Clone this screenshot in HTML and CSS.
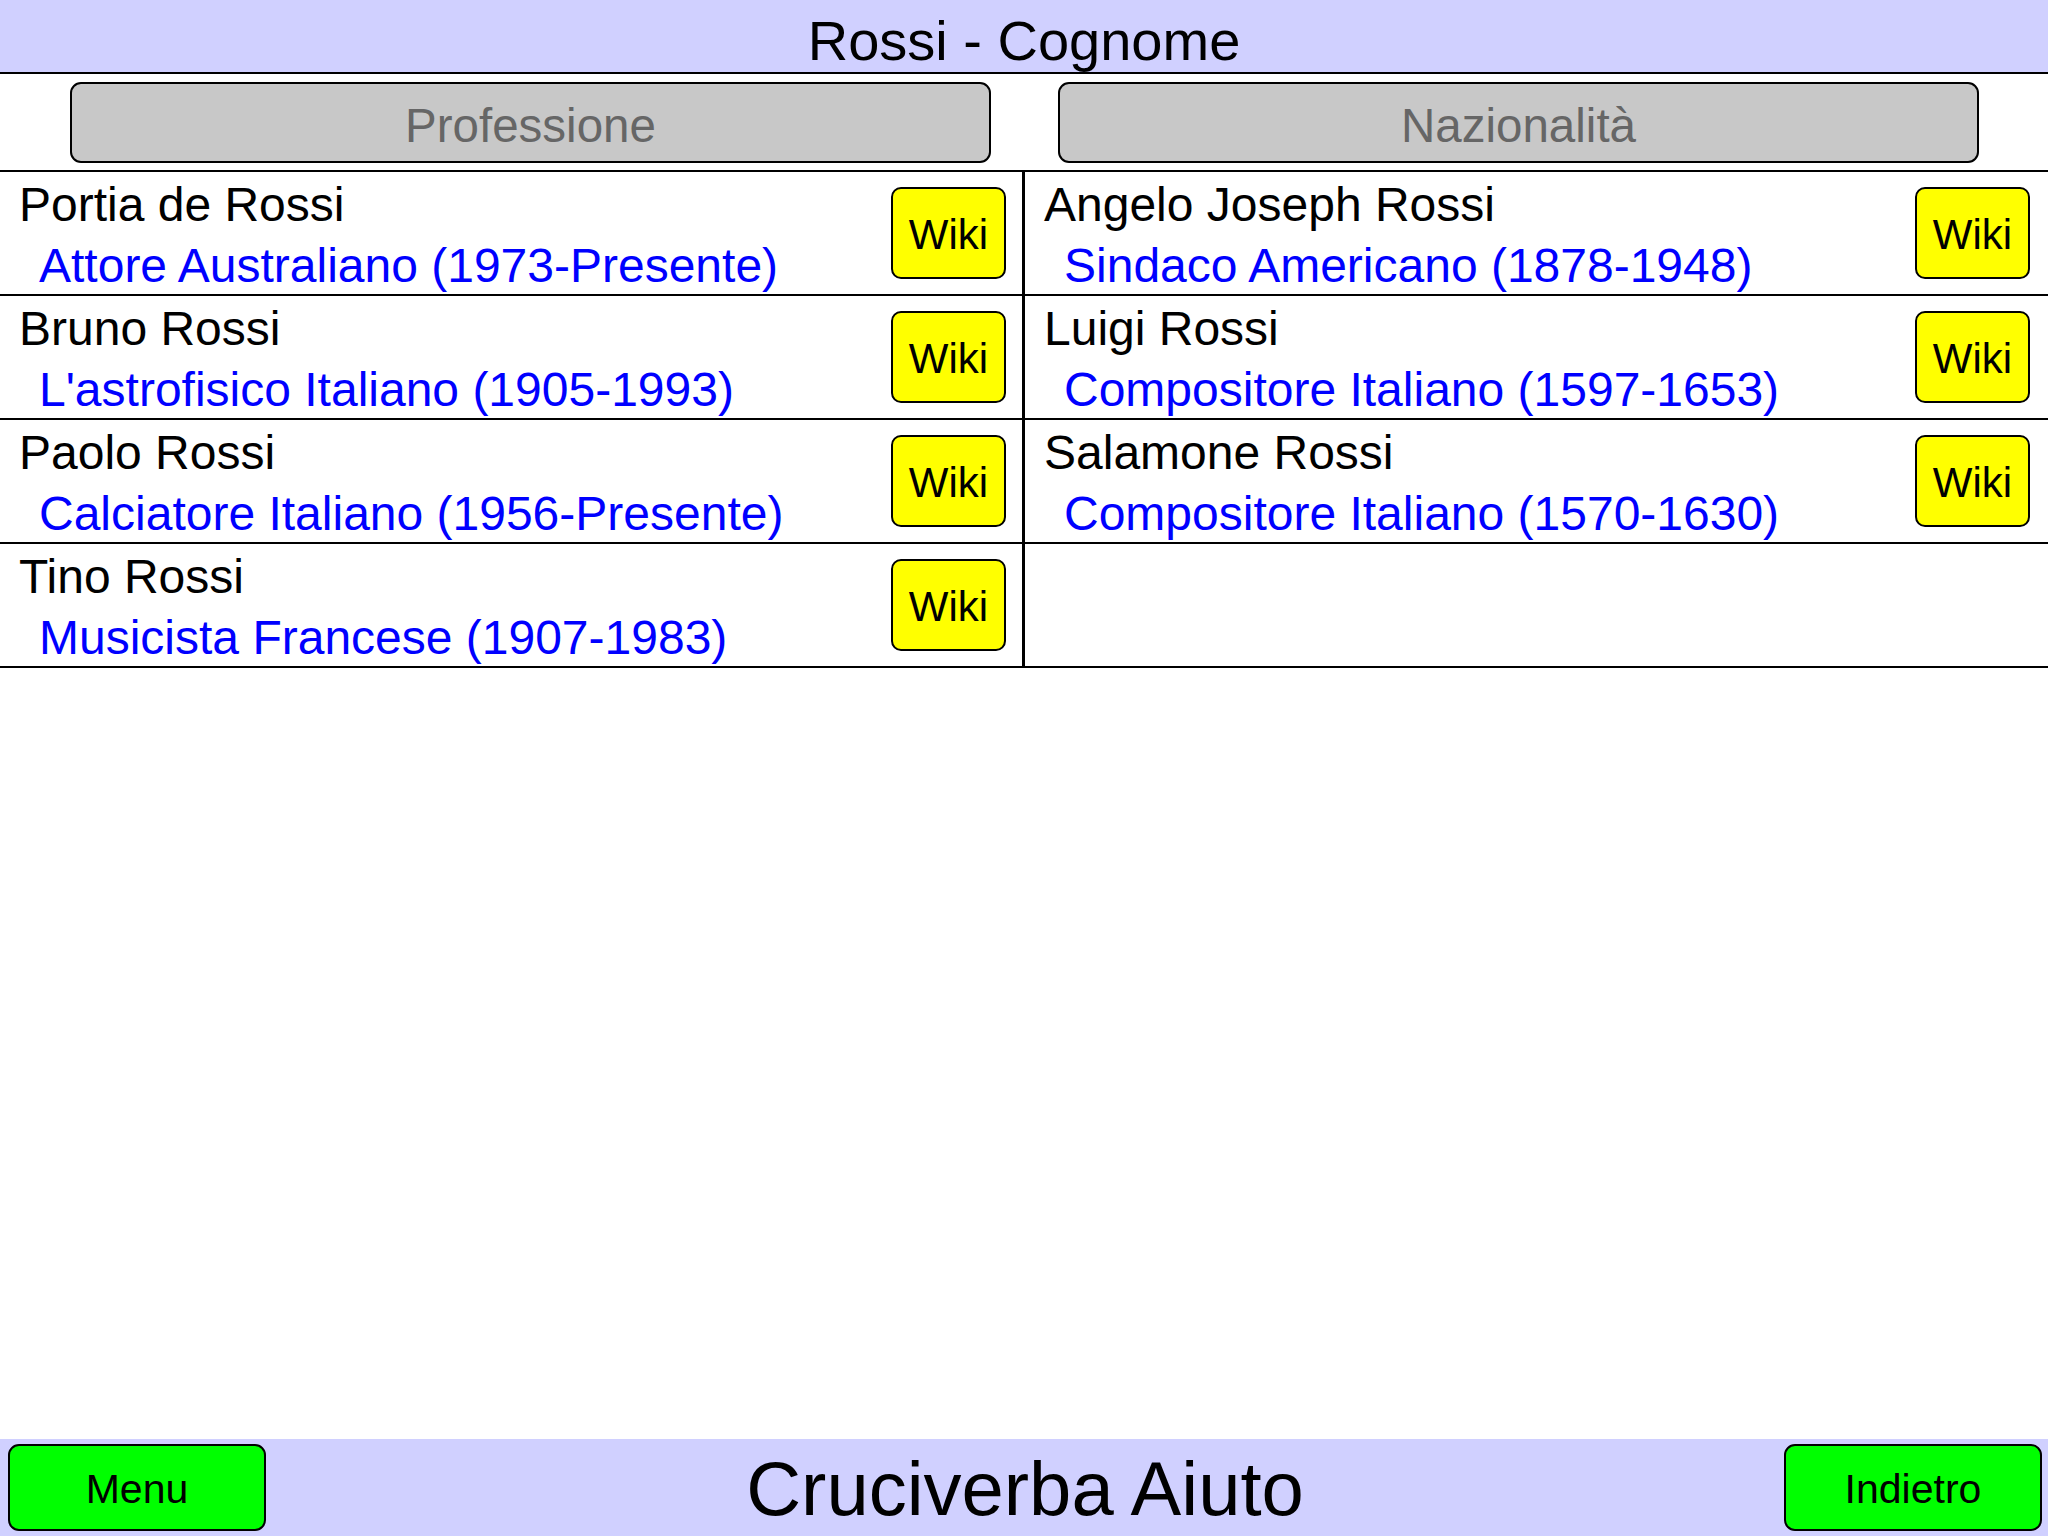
FILE: index.html
```html
<!DOCTYPE html>
<html lang="it">
<head>
<meta charset="utf-8">
<title>Rossi - Cognome</title>
<link rel="stylesheet" href="styles.css">
</head>
<body>
<div class="page">
  <header class="topbar">Rossi - Cognome</header>
  <nav class="tabs">
    <div class="tab">Professione</div>
    <div class="tab">Nazionalità</div>
  </nav>
  <main class="list">
    <div class="row">
      <div class="cell left">
        <div class="info"><div class="name">Portia de Rossi</div><div class="desc">Attore Australiano (1973-Presente)</div></div>
        <div class="wiki">Wiki</div>
      </div>
      <div class="cell right">
        <div class="info"><div class="name">Angelo Joseph Rossi</div><div class="desc">Sindaco Americano (1878-1948)</div></div>
        <div class="wiki">Wiki</div>
      </div>
    </div>
    <div class="row">
      <div class="cell left">
        <div class="info"><div class="name">Bruno Rossi</div><div class="desc">L'astrofisico Italiano (1905-1993)</div></div>
        <div class="wiki">Wiki</div>
      </div>
      <div class="cell right">
        <div class="info"><div class="name">Luigi Rossi</div><div class="desc">Compositore Italiano (1597-1653)</div></div>
        <div class="wiki">Wiki</div>
      </div>
    </div>
    <div class="row">
      <div class="cell left">
        <div class="info"><div class="name">Paolo Rossi</div><div class="desc">Calciatore Italiano (1956-Presente)</div></div>
        <div class="wiki">Wiki</div>
      </div>
      <div class="cell right">
        <div class="info"><div class="name">Salamone Rossi</div><div class="desc">Compositore Italiano (1570-1630)</div></div>
        <div class="wiki">Wiki</div>
      </div>
    </div>
    <div class="row">
      <div class="cell left">
        <div class="info"><div class="name">Tino Rossi</div><div class="desc">Musicista Francese (1907-1983)</div></div>
        <div class="wiki">Wiki</div>
      </div>
      <div class="cell right"></div>
    </div>
  </main>
  <div class="spacer"></div>
  <footer class="bottombar">
    <div class="btn menu">Menu</div>
    <div class="apptitle">Cruciverba Aiuto</div>
    <div class="btn back">Indietro</div>
  </footer>
</div>
</body>
</html>
```
FILE: styles.css
```css
html, body {
  margin: 0;
  padding: 0;
  background: #ffffff;
}

body {
  font-family: "Liberation Sans", Arial, Helvetica, sans-serif;
  color: #000;
}

.page {
  display: flex;
  flex-direction: column;
  height: 1536px;
  width: 2048px;
  overflow: hidden;
}

.topbar {
  box-sizing: border-box;
  height: 74px;
  background: #d0d0ff;
  border-bottom: 2px solid #000;
  text-align: center;
  font-size: 56px;
  line-height: 60px;
  padding-top: 11px;
}

.tabs {
  box-sizing: border-box;
  height: 96px;
  display: flex;
  gap: 67px;
  padding: 8px 69px 0 70px;
}

.tab {
  box-sizing: border-box;
  width: 921px;
  height: 81px;
  background: #c8c8c8;
  border: 2px solid #000;
  border-radius: 11px;
  color: #666666;
  font-size: 47.5px;
  text-align: center;
  padding-top: 7px;
  line-height: 70px;
}

.list {
  border-top: 2px solid #000;
}

.row {
  display: flex;
  box-sizing: border-box;
  height: 124px;
  border-bottom: 2px solid #000;
}

.cell {
  display: flex;
  align-items: center;
  box-sizing: border-box;
}

.cell.left {
  width: 1025px;
  border-right: 3px solid #000;
  padding: 0 16px 0 19px;
}

.cell.right {
  flex: 1;
  padding: 0 18px 0 19px;
}

.info {
  flex: 1;
  align-self: stretch;
  padding-top: 2px;
  font-size: 48px;
  line-height: 61px;
  white-space: nowrap;
}

.desc {
  color: #0000ff;
  padding-left: 20px;
}

.wiki {
  box-sizing: border-box;
  width: 115px;
  height: 92px;
  background: #ffff00;
  border: 2px solid #000;
  border-radius: 10px;
  font-size: 42px;
  padding-top: 3px;
  line-height: 85px;
  text-align: center;
}

.spacer {
  flex: 1;
}

.bottombar {
  box-sizing: border-box;
  height: 97px;
  background: #d0d0ff;
  display: grid;
  grid-template-columns: 1fr auto 1fr;
  align-items: start;
  padding: 5px 6px 0 8px;
}

.btn {
  box-sizing: border-box;
  width: 258px;
  height: 87px;
  background: #00ff00;
  border: 2px solid #000;
  border-radius: 11px;
  font-size: 41px;
  text-align: center;
  padding-top: 4px;
  line-height: 79px;
}

.btn.menu {
  justify-self: start;
}

.btn.back {
  justify-self: end;
}

.apptitle {
  font-size: 76px;
  padding-top: 2px;
  line-height: 85px;
  white-space: nowrap;
}
```
